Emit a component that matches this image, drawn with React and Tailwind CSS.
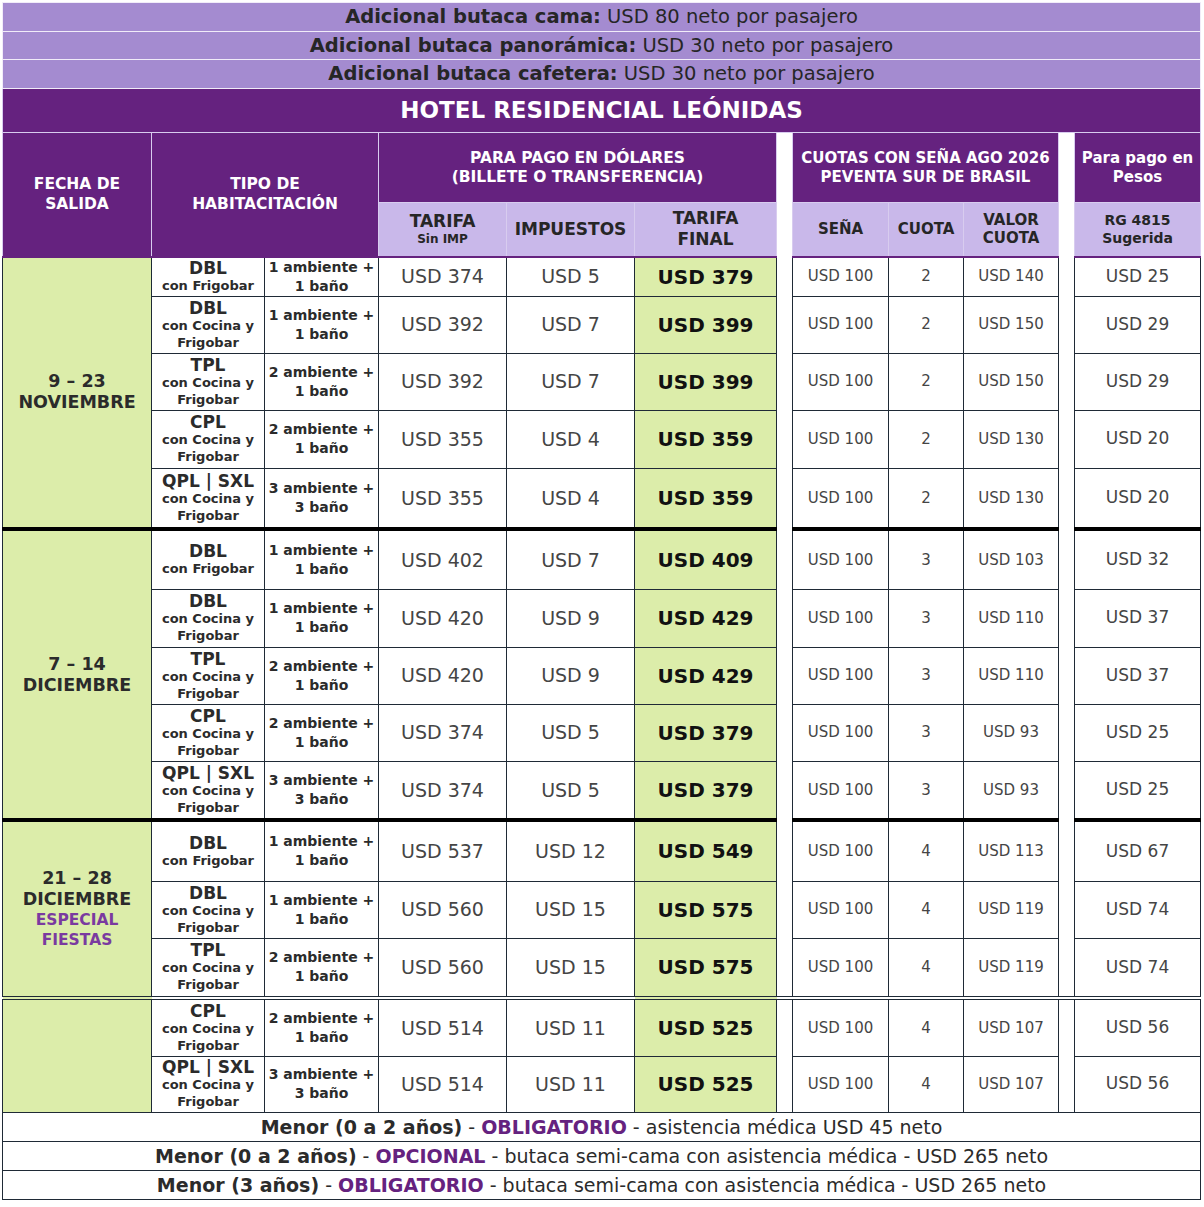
import React from "react";

const FONT = "font-['DejaVu_Sans',sans-serif]";

const groups = [
  {
    date: ["9 – 23", "NOVIEMBRE"],
    end: "thick",
    rows: [
      ["DBL", ["con Frigobar"], "1 ambiente +", "1 baño", 374, 5, 379, 2, 140, 25, "h-[39px]"],
      ["DBL", ["con Cocina y", "Frigobar"], "1 ambiente +", "1 baño", 392, 7, 399, 2, 150, 29, "h-[57px]"],
      ["TPL", ["con Cocina y", "Frigobar"], "2 ambiente +", "1 baño", 392, 7, 399, 2, 150, 29, "h-[57px]"],
      ["CPL", ["con Cocina y", "Frigobar"], "2 ambiente +", "1 baño", 355, 4, 359, 2, 130, 20, "h-[58px]"],
      ["QPL | SXL", ["con Cocina y", "Frigobar"], "3 ambiente +", "3 baño", 355, 4, 359, 2, 130, 20, "h-[61px]"],
    ],
  },
  {
    date: ["7 – 14", "DICIEMBRE"],
    end: "thick",
    rows: [
      ["DBL", ["con Frigobar"], "1 ambiente +", "1 baño", 402, 7, 409, 3, 103, 32, "h-[60px]"],
      ["DBL", ["con Cocina y", "Frigobar"], "1 ambiente +", "1 baño", 420, 9, 429, 3, 110, 37, "h-[58px]"],
      ["TPL", ["con Cocina y", "Frigobar"], "2 ambiente +", "1 baño", 420, 9, 429, 3, 110, 37, "h-[57px]"],
      ["CPL", ["con Cocina y", "Frigobar"], "2 ambiente +", "1 baño", 374, 5, 379, 3, 93, 25, "h-[57px]"],
      ["QPL | SXL", ["con Cocina y", "Frigobar"], "3 ambiente +", "3 baño", 374, 5, 379, 3, 93, 25, "h-[59px]"],
    ],
  },
  {
    date: ["21 – 28", "DICIEMBRE"],
    extra: ["ESPECIAL", "FIESTAS"],
    end: "double",
    rows: [
      ["DBL", ["con Frigobar"], "1 ambiente +", "1 baño", 537, 12, 549, 4, 113, 67, "h-[61px]"],
      ["DBL", ["con Cocina y", "Frigobar"], "1 ambiente +", "1 baño", 560, 15, 575, 4, 119, 74, "h-[57px]"],
      ["TPL", ["con Cocina y", "Frigobar"], "2 ambiente +", "1 baño", 560, 15, 575, 4, 119, 74, "h-[60px]"],
    ],
  },
  {
    date: [],
    end: "none",
    rows: [
      ["CPL", ["con Cocina y", "Frigobar"], "2 ambiente +", "1 baño", 514, 11, 525, 4, 107, 56, "h-[58px]"],
      ["QPL | SXL", ["con Cocina y", "Frigobar"], "3 ambiente +", "3 baño", 514, 11, 525, 4, 107, 56, "h-[56px]"],
    ],
  },
];

const cell = "border border-[#1f2a36] text-center align-middle p-0";
const head = "border border-[#d8ccef] text-center align-middle p-0";

const endClass = {
  thick: "border-b-4 border-b-black",
  double: "border-b-4 border-b-[#1f2a36] border-double",
  none: "",
};

function Banner({ label, rest, h }) {
  return (
    <tr className={`${h} bg-[#a48bd0]`}>
      <td colSpan={12} className="border border-[#f1ecf9] text-center align-middle p-0 text-[19.5px] leading-[22px] text-[#262626]">
        <span className="font-bold">{label}</span> {rest}
      </td>
    </tr>
  );
}

function Footer({ label, tag, rest }) {
  return (
    <tr className="h-[29px] bg-white">
      <td colSpan={12} className="border border-[#1f2a36] text-center align-middle p-0 text-[19px] leading-[22px] text-[#2b2b2b]">
        <span className="font-bold">{label}</span> - <span className="font-bold text-[#65227f]">{tag}</span> - {rest}
      </td>
    </tr>
  );
}

export default function App() {
  return (
    <div className={`${FONT} bg-white pt-[2px] pl-[2px] text-[#2b2b2b]`}>
      <table className="table-fixed border-collapse w-[1198px]">
        <colgroup>
          <col className="w-[149px]" />
          <col className="w-[113px]" />
          <col className="w-[114px]" />
          <col className="w-[128px]" />
          <col className="w-[128px]" />
          <col className="w-[142px]" />
          <col className="w-[16px]" />
          <col className="w-[96px]" />
          <col className="w-[75px]" />
          <col className="w-[95px]" />
          <col className="w-[16px]" />
          <col className="w-[126px]" />
        </colgroup>
        <tbody>
          <Banner h="h-[29px]" label="Adicional butaca cama:" rest="USD 80 neto por pasajero" />
          <Banner h="h-[28px]" label="Adicional butaca panorámica:" rest="USD 30 neto por pasajero" />
          <Banner h="h-[29px]" label="Adicional butaca cafetera:" rest="USD 30 neto por pasajero" />
          <tr className="h-[44px] bg-[#65227f]">
            <td colSpan={12} className="border border-[#d8ccef] text-center align-middle p-0 text-[23px] font-bold text-white">
              HOTEL RESIDENCIAL LEÓNIDAS
            </td>
          </tr>

          <tr className="h-[70px]">
            <td rowSpan={2} className={`${head} bg-[#65227f] border-b-2 border-b-[#65227f] text-white font-bold text-[15.5px] leading-[20px]`}>
              FECHA DE<br />SALIDA
            </td>
            <td rowSpan={2} colSpan={2} className={`${head} bg-[#65227f] border-b-2 border-b-[#65227f] text-white font-bold text-[15.5px] leading-[20px]`}>
              TIPO DE<br />HABITACITACIÓN
            </td>
            <td colSpan={3} className={`${head} bg-[#65227f] text-white font-bold text-[15.5px] leading-[19px]`}>
              PARA PAGO EN DÓLARES<br />(BILLETE O TRANSFERENCIA)
            </td>
            <td rowSpan={2} className="p-0 bg-white"></td>
            <td colSpan={3} className={`${head} bg-[#65227f] text-white font-bold text-[15px] leading-[19px]`}>
              CUOTAS CON SEÑA AGO 2026<br />PEVENTA SUR DE BRASIL
            </td>
            <td rowSpan={2} className="p-0 bg-white"></td>
            <td className={`${head} bg-[#65227f] text-white font-bold text-[15px] leading-[19px]`}>
              Para pago en<br />Pesos
            </td>
          </tr>
          <tr className="h-[54px] bg-[#c9b8ea] text-[#262626] font-bold">
            <td className={`${head} border-b-2 border-b-[#65227f]`}>
              <div className="text-[17px] leading-[19px]">TARIFA</div>
              <div className="text-[12px] leading-[16px]">Sin IMP</div>
            </td>
            <td className={`${head} border-b-2 border-b-[#65227f] text-[17px]`}>IMPUESTOS</td>
            <td className={`${head} border-b-2 border-b-[#65227f] text-[17px] leading-[21px]`}>
              TARIFA<br />FINAL
            </td>
            <td className={`${head} border-b-2 border-b-[#65227f] text-[15px]`}>SEÑA</td>
            <td className={`${head} border-b-2 border-b-[#65227f] text-[15px]`}>CUOTA</td>
            <td className={`${head} border-b-2 border-b-[#65227f] text-[15px] leading-[18px]`}>
              VALOR<br />CUOTA
            </td>
            <td className={`${head} border-b-2 border-b-[#65227f] text-[14px] leading-[18px]`}>
              RG 4815<br />Sugerida
            </td>
          </tr>

          {groups.map((g, gi) =>
            g.rows.map((r, ri) => {
              const last = ri === g.rows.length - 1;
              const b = last ? endClass[g.end] : "";
              const [type, sub, amb, bano, tarifa, imp, fin, cuota, valor, pesos, h] = r;
              return (
                <tr key={`${gi}-${ri}`} className={h}>
                  {ri === 0 && (
                    <td rowSpan={g.rows.length} className={`${cell} ${endClass[g.end]} bg-[#dcedaa] font-bold text-[17.5px] leading-[21px] text-[#2b2b2b]`}>
                      {g.date.map((d) => (
                        <div key={d}>{d}</div>
                      ))}
                      {g.extra && (
                        <div className="text-[15.5px] leading-[20px] text-[#7a3aa0]">
                          {g.extra.map((d) => (
                            <div key={d}>{d}</div>
                          ))}
                        </div>
                      )}
                    </td>
                  )}
                  <td className={`${cell} ${b} bg-white font-bold text-[#2b2b2b]`}>
                    <div className="text-[17px] leading-[18px]">{type}</div>
                    {sub.map((s) => (
                      <div key={s} className="text-[13px] leading-[17px]">{s}</div>
                    ))}
                  </td>
                  <td className={`${cell} ${b} bg-white font-bold text-[14px] leading-[19px] text-[#2b2b2b]`}>
                    <div>{amb}</div>
                    <div>{bano}</div>
                  </td>
                  <td className={`${cell} ${b} bg-white text-[19px] text-[#454545]`}>USD {tarifa}</td>
                  <td className={`${cell} ${b} bg-white text-[19px] text-[#454545]`}>USD {imp}</td>
                  <td className={`${cell} ${b} bg-[#dcedaa] text-[20px] font-bold text-[#111]`}>USD {fin}</td>
                  <td className={`p-0 bg-white ${g.end === "double" && last ? b : ""}`}></td>
                  <td className={`${cell} ${b} bg-white text-[15px] text-[#454545]`}>USD 100</td>
                  <td className={`${cell} ${b} bg-white text-[15px] text-[#454545]`}>{cuota}</td>
                  <td className={`${cell} ${b} bg-white text-[15px] text-[#454545]`}>USD {valor}</td>
                  <td className={`p-0 bg-white ${g.end === "double" && last ? b : ""}`}></td>
                  <td className={`${cell} ${b} bg-white text-[17px] text-[#454545]`}>USD {pesos}</td>
                </tr>
              );
            })
          )}

          <Footer label="Menor (0 a 2 años)" tag="OBLIGATORIO" rest="asistencia médica USD 45 neto" />
          <Footer label="Menor (0 a 2 años)" tag="OPCIONAL" rest="butaca semi-cama con asistencia médica - USD 265 neto" />
          <Footer label="Menor (3 años)" tag="OBLIGATORIO" rest="butaca semi-cama con asistencia médica - USD 265 neto" />
        </tbody>
      </table>
    </div>
  );
}
